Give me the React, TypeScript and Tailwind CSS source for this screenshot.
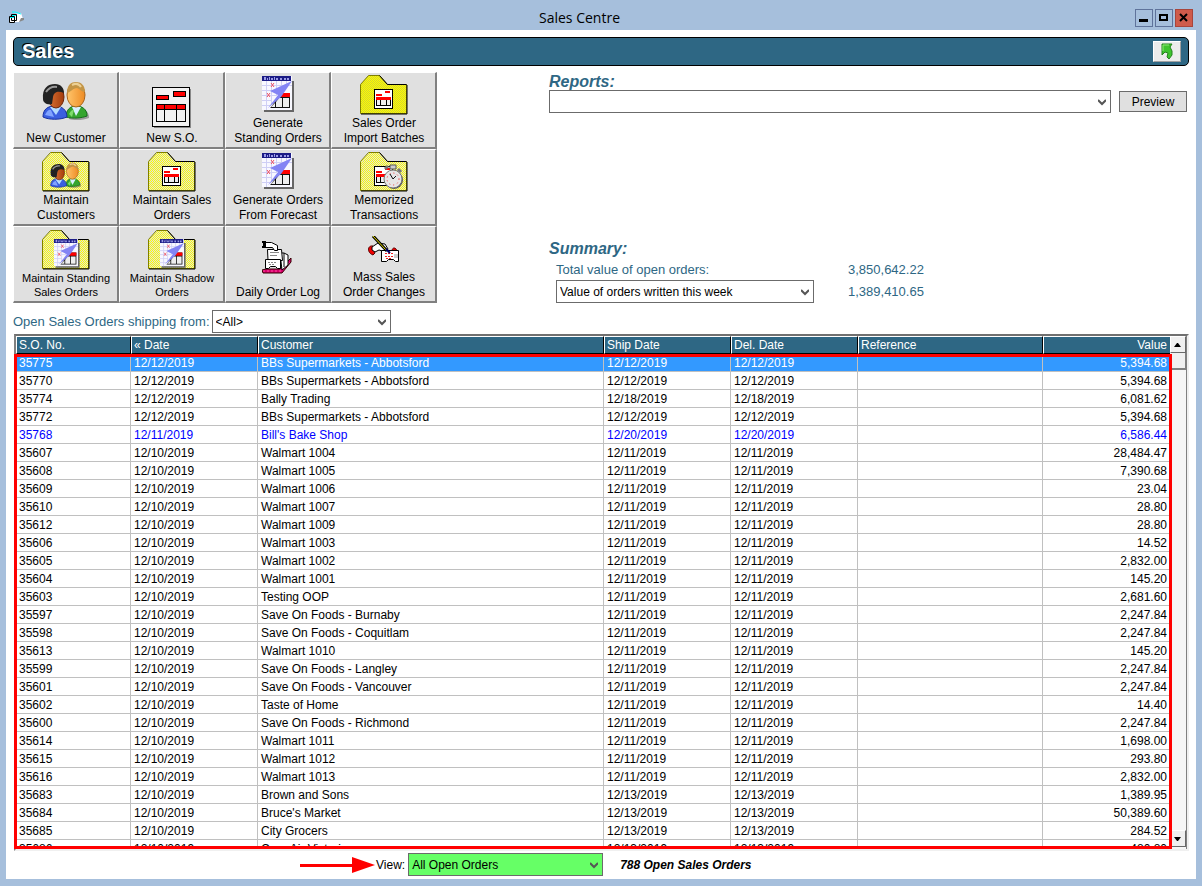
import type { ReactNode } from "react";

const orders = [
  ["35775", "12/12/2019", "BBs Supermarkets - Abbotsford", "12/12/2019", "5,394.68"],
  ["35770", "12/12/2019", "BBs Supermarkets - Abbotsford", "12/12/2019", "5,394.68"],
  ["35774", "12/12/2019", "Bally Trading", "12/18/2019", "6,081.62"],
  ["35772", "12/12/2019", "BBs Supermarkets - Abbotsford", "12/12/2019", "5,394.68"],
  ["35768", "12/11/2019", "Bill's Bake Shop", "12/20/2019", "6,586.44"],
  ["35607", "12/10/2019", "Walmart 1004", "12/11/2019", "28,484.47"],
  ["35608", "12/10/2019", "Walmart 1005", "12/11/2019", "7,390.68"],
  ["35609", "12/10/2019", "Walmart 1006", "12/11/2019", "23.04"],
  ["35610", "12/10/2019", "Walmart 1007", "12/11/2019", "28.80"],
  ["35612", "12/10/2019", "Walmart 1009", "12/11/2019", "28.80"],
  ["35606", "12/10/2019", "Walmart 1003", "12/11/2019", "14.52"],
  ["35605", "12/10/2019", "Walmart 1002", "12/11/2019", "2,832.00"],
  ["35604", "12/10/2019", "Walmart 1001", "12/11/2019", "145.20"],
  ["35603", "12/10/2019", "Testing OOP", "12/11/2019", "2,681.60"],
  ["35597", "12/10/2019", "Save On Foods - Burnaby", "12/11/2019", "2,247.84"],
  ["35598", "12/10/2019", "Save On Foods - Coquitlam", "12/11/2019", "2,247.84"],
  ["35613", "12/10/2019", "Walmart 1010", "12/11/2019", "145.20"],
  ["35599", "12/10/2019", "Save On Foods - Langley", "12/11/2019", "2,247.84"],
  ["35601", "12/10/2019", "Save On Foods - Vancouver", "12/11/2019", "2,247.84"],
  ["35602", "12/10/2019", "Taste of Home", "12/11/2019", "14.40"],
  ["35600", "12/10/2019", "Save On Foods - Richmond", "12/11/2019", "2,247.84"],
  ["35614", "12/10/2019", "Walmart 1011", "12/11/2019", "1,698.00"],
  ["35615", "12/10/2019", "Walmart 1012", "12/11/2019", "293.80"],
  ["35616", "12/10/2019", "Walmart 1013", "12/11/2019", "2,832.00"],
  ["35683", "12/10/2019", "Brown and Sons", "12/13/2019", "1,389.95"],
  ["35684", "12/10/2019", "Bruce's Market", "12/13/2019", "50,389.60"],
  ["35685", "12/10/2019", "City Grocers", "12/13/2019", "284.52"],
  ["35686", "12/10/2019", "Cara Air Victoria", "12/13/2019", "480.80"],
];

// checkerboard of single pixels that tints the folders
const ditherDots = Array.from({ length: 38 * 23 }, (_, i) => {
  const row = Math.floor(i / 23);
  return `M${(i % 23) * 2 + 1 + (row % 2)} ${row + 1}h1v1h-1z`;
}).join("");

function People() {
  return (
    <g>
      <path d="M26 37c-1-7 3-11 9-11s11 3 11 10c-5 2-14 3-20 1z" fill="#555" opacity=".5" transform="translate(1 1)" />
      <path d="M24 36c0-7 4-11 10-11s11 3 11 10c-5 2-14 3-21 1z" fill="#35a52f" stroke="#14701a" />
      <path d="M30 26l4 9 5-9z" fill="#d8f0ff" />
      <path d="M27 33q3-5 5-4l-2 7z" fill="#7fdc6c" />
      <ellipse cx="34" cy="14" rx="9" ry="12" fill="url(#blondFace)" stroke="#a9641c" />
      <path d="M25 12c0-8 4-11 9-11s9 3 9 10c-3 0-5-3-8-4-4 0-6 4-10 5z" fill="#c39546" />
      <path d="M30 4q6-3 9 2" fill="none" stroke="#ecd094" strokeWidth="2" />
      <path d="M1 36c0-8 5-11 12-11s12 4 12 11c-7 3-18 3-24 0z" fill="#3b5fe0" stroke="#172f9e" />
      <path d="M8 26l6 8 5-8z" fill="#b5dcff" />
      <path d="M3 34q3-6 6-5l3 7z" fill="#82a4ff" />
      <ellipse cx="14" cy="16" rx="8" ry="11" fill="url(#darkFace)" stroke="#6d2407" />
      <path d="M1 18C0 7 6 3 13 3c6 0 9 4 9 9-5-2-10-2-11 4l-1 7c-5 1-9-1-9-5z" fill="#222" />
      <path d="M4 11q4-6 11-5" fill="none" stroke="#999" strokeWidth="2" />
    </g>
  );
}

function Form() {
  return (
    <g shapeRendering="crispEdges">
      <path d="M2 2h37v39H2z" fill="#888" />
      <path d="M0 0h38v40H0z" fill="#000" />
      <path d="M1 1h36v38H1z" fill="#f2f2f2" />
      <path d="M4 8h13v5H4zM21 4h13v6H21zM4 17h30v18H4z" fill="#000" />
      <path d="M5 9h11v3H5zM22 5h11v4H22zM5 18h7v4H5zM13 18h11v4H13zM25 18h8v4h-8z" fill="#f00" />
      <path d="M5 23h7v11H5zM13 23h11v11H13zM25 23h8v11h-8z" fill="#f2f2f2" />
    </g>
  );
}

function SmallForm() {
  return (
    <g shapeRendering="crispEdges">
      <path d="M0 0h19v20H0z" fill="#000" />
      <path d="M1 1h17v18H1z" fill="#fff" />
      <path d="M2 5h6v2H2zM11 2h5v2h-5zM2 8h15v3H2z" fill="#f00" />
      <path d="M2 11h15v6H2z" fill="#000" />
      <path d="M3 11h3v5H3zM7 11h5v5H7zM13 11h3v5h-3z" fill="#eee" />
    </g>
  );
}

function Calendar() {
  return (
    <g>
      <path d="M2 5h30v31H2z" fill="#666" />
      <path d="M0 0h30v34H0z" fill="#f8f8ff" />
      <path d="M0 9.500h30M0 14.500h20M0 19.500h14M0 24.500h10M0 29.500h8M4.500 5v29M9.500 5v23M14.500 5v15M19.500 5v12M24.500 5v7" stroke="#cfcff5" fill="none" />
      <path d="M0 0h29v5H0z" fill="#1c1c86" />
      <path d="M2 1h2v3H2zM5 2h1v2H5zM7 1h1v3H7zM9 2h2v2H9zM12 1h1v3h-1zM14 2h2v2h-2zM18 2h2v2h-2zM22 2h2v2h-2zM25 2h2v2h-2z" fill="#9c9ce6" />
      <path d="M9 7l3 4M12 7l-3 4M5 17l3 4M8 17l-3 4" stroke="#f0505f" />
      <path d="M9 31l10-14h9v15H8z" fill="#111" />
      <path d="M20 17h8v4h-9z" fill="#f00" />
      <path d="M21 22h6v9h-6zM14 26l3-4h3v9h-6zM9 31l4-4v4z" fill="#eee" />
      <path d="M30 5L8 15l8 4L6 32 19 21z" fill="#8384f4" />
    </g>
  );
}

function Folder({ solid, children }: { solid?: boolean; children: ReactNode }) {
  return (
    <svg width="48" height="40" viewBox="0 0 48 40">
      <path d="M.5 38.500V9.500l8-9h11l8 9h19v29z" fill={solid ? "#d2d232" : "#dedede"} />
      <path d={ditherDots} clipPath="url(#folderShape)" fill="#ffff00" />
      <path d="M.5 38.500V9.500l8-9h11l8 9h19v29z" fill="none" stroke="#808000" />
      <path d="M19.500.5l8 9h19M47 10v29H1" fill="none" stroke="#000" />
      {children}
    </svg>
  );
}

function Stopwatch() {
  return (
    <g>
      <path d="M25 17l3-3M38 17l3 3" stroke="#777" strokeWidth="3" />
      <path d="M30 13h6v4h-6z" fill="#ccc" stroke="#555" />
      <circle cx="34" cy="28" r="9" fill="#555" />
      <circle cx="33" cy="27" r="9" fill="#e6e6e6" stroke="#777" />
      <circle cx="33" cy="27" r="6" fill="none" stroke="#e33" strokeDasharray="1 3" />
      <path d="M33 27l-3-5M33 27l3-3" stroke="#111" />
    </g>
  );
}

function DailyLog() {
  return (
    <svg width="32" height="34" viewBox="0 0 32 34">
      <path d="M0 29l4-1h14l11-11v4L20 32H1z" fill="#d8006c" stroke="#300" />
      <path d="M1 30h18l9-9" stroke="#ff4fa0" strokeDasharray="2 2" fill="none" />
      <path d="M18 12h4l4 2v10l-6 5z" fill="#fff" stroke="#000" />
      <path d="M22 12v14" stroke="#000" />
      <path d="M5.500 8.500h14l1 11H6z" fill="#fff" stroke="#000" />
      <path d="M8 11.500h9M8 14.500h7" stroke="#888" />
      <path d="M3.500 18.500h15v9h-3l-2-2h-5l-2 2h-3z" fill="#fff" stroke="#000" />
      <path d="M6 21.500h9M7 23.500h6" stroke="#888" strokeDasharray="2 1" />
      <path d="M3.500 1.500h6l6 3v5h-3l-2-3h-7z" fill="#fff" stroke="#000" />
      <path d="M0 1h4M0 6h4M2 0v7" stroke="#000" strokeWidth="2" />
    </svg>
  );
}

function MassChanges() {
  return (
    <svg width="32" height="28" viewBox="0 0 32 28">
      <path d="M5 10c-6-1-6 7 0 9l2-2-2-4z" fill="#e00" stroke="#500" />
      <path d="M4 11l6-4 7 1 3 5-2 3-7-2-4 2-3-2z" fill="#fff" stroke="#000" />
      <path d="M24 15c0-4 4-4 5 0z" fill="#e00" stroke="#500" />
      <path d="M13.500 14.500h17v11h-3l-2-2h-5l-2 2h-5z" fill="#fff" stroke="#000" />
      <path d="M17 17.500h8M17 20.500h8M18 22.500h6" stroke="#e22" strokeDasharray="2 1" />
      <path d="M26 18h4v4h-4z" fill="#ccc" />
      <path d="M5 0l14 15" stroke="#000" strokeWidth="3" />
      <path d="M5 0l13 14" stroke="#e8e000" strokeWidth="1" />
      <path d="M18 13l4 4" stroke="#00006a" strokeWidth="2" />
    </svg>
  );
}

const calendarIcon = (
  <svg width="32" height="39" viewBox="0 0 32 39">
    <Calendar />
  </svg>
);

const folderCalendar = (
  <Folder>
    <g transform="translate(12 9) scale(.8)">
      <Calendar />
    </g>
  </Folder>
);

const actions: { lines: string[]; icon: ReactNode; small?: boolean; gap?: string }[] = [
  {
    lines: ["New Customer"],
    gap: "pb-[10px]",
    icon: (
      <svg width="48" height="40" viewBox="0 0 48 40">
        <People />
      </svg>
    ),
  },
  {
    lines: ["New S.O."],
    icon: (
      <svg width="40" height="43" viewBox="0 0 40 43">
        <Form />
      </svg>
    ),
  },
  { lines: ["Generate", "Standing Orders"], icon: calendarIcon },
  {
    lines: ["Sales Order", "Import Batches"],
    icon: (
      <Folder solid>
        <g transform="translate(14 14)">
          <SmallForm />
        </g>
      </Folder>
    ),
  },
  {
    lines: ["Maintain", "Customers"],
    icon: (
      <Folder>
        <g transform="translate(8 10) scale(.66)">
          <People />
        </g>
      </Folder>
    ),
  },
  {
    lines: ["Maintain Sales", "Orders"],
    icon: (
      <Folder>
        <g transform="translate(14 14)">
          <SmallForm />
        </g>
      </Folder>
    ),
  },
  { lines: ["Generate Orders", "From Forecast"], icon: calendarIcon },
  {
    lines: ["Memorized", "Transactions"],
    icon: (
      <Folder>
        <g transform="translate(14 14)">
          <SmallForm />
        </g>
        <Stopwatch />
      </Folder>
    ),
  },
  { lines: ["Maintain Standing", "Sales Orders"], icon: folderCalendar, small: true },
  { lines: ["Maintain Shadow", "Orders"], icon: folderCalendar, small: true },
  { lines: ["Daily Order Log"], gap: "pb-[10px]", icon: <DailyLog /> },
  { lines: ["Mass Sales", "Order Changes"], gap: "pb-[6px]", icon: <MassChanges /> },
];

function Select({ id, label, options, className = "" }: { id: string; label?: string; options: string[]; className?: string }) {
  return (
    <div className={`relative h-[23px] border border-[#6b6b6b] ${className}`}>
      <select id={id} aria-label={label} className="block h-full w-full appearance-none bg-transparent pl-[3px] pr-5 text-[12px] text-black outline-none">
        {options.map((o) => (
          <option key={o}>{o}</option>
        ))}
      </select>
      <svg className="pointer-events-none absolute right-1 top-2" width="8" height="7" viewBox="0 0 8 7">
        <path d="M0 1l4 4 4-4" fill="none" stroke="#555" strokeWidth="2" />
      </svg>
    </div>
  );
}

function TitleBar() {
  return (
    <header className="flex h-[30px] shrink-0 items-center justify-between px-[9px] pt-[6px]">
      <svg width="15" height="14" viewBox="0 0 15 14">
        <path d="M5 3l7-1 2 6-4 3H5z" fill="#fff" />
        <path d="M3 1h3l6 2" stroke="#0ff" fill="none" />
        <path d="M12 7h3v2l-5 2z" fill="#888" />
        <path d="M2.500 3.500h5v6h-5zM.5 5.500h5v6h-5z" fill="#fff" stroke="#000" />
        <path d="M3 4.500h4M1 6.500h4" stroke="#0ff" />
      </svg>
      <h1 className="font-['Open_Sans','Noto_Sans',sans-serif] text-[14px] leading-5 text-black">Sales Centre</h1>
      <div className="flex gap-[2px]">
        <button aria-label="Minimize" className="grid size-[18px] place-items-center border border-[#5f739b]">
          <svg width="10" height="10" viewBox="0 0 10 10">
            <path d="M0 6h9v3H0z" />
          </svg>
        </button>
        <button aria-label="Maximize" className="grid size-[18px] place-items-center border border-[#5f739b]">
          <svg width="10" height="10" viewBox="0 0 10 10">
            <path d="M1 2h7v5H1z" fill="none" stroke="#000" strokeWidth="2" />
          </svg>
        </button>
        <button aria-label="Close" className="grid size-[18px] place-items-center border border-[#a8453c] bg-[#cf5b4b]">
          <svg width="10" height="10" viewBox="0 0 10 10">
            <path d="M1 1l7 7M8 1L1 8" stroke="#000" strokeWidth="2" />
          </svg>
        </button>
      </div>
    </header>
  );
}

function OrdersTable() {
  const th = "h-[18px] border-b border-r border-black border-l border-l-white border-t border-t-white px-[2px] text-left font-normal";
  const td = "h-[18px] overflow-hidden whitespace-nowrap border-b border-r border-[#c0c0c0] px-[3px] pt-px";
  return (
    <div className="ml-px mt-px flex min-h-0 flex-1 border-2 border-b-[#f0f0f0] border-l-[#808080] border-r-[#f0f0f0] border-t-[#707070]">
      <div className="relative min-w-0 flex-1">
        <div className="h-full overflow-hidden">
          <table className="w-full table-fixed border-separate border-spacing-0 text-[12px] leading-[16px]">
            <colgroup>
              <col className="w-[115px]" />
              <col className="w-[127px]" />
              <col />
              <col className="w-[127px]" />
              <col className="w-[127px]" />
              <col className="w-[185px]" />
              <col className="w-[127px]" />
            </colgroup>
            <thead className="bg-[#2e6784] text-white">
              <tr>
                <th className={th}>S.O. No.</th>
                <th className={th}>« Date</th>
                <th className={th}>Customer</th>
                <th className={th}>Ship Date</th>
                <th className={th}>Del. Date</th>
                <th className={th}>Reference</th>
                <th className="h-[18px] border-b border-l border-t border-b-black border-l-white border-t-white px-[3px] text-right font-normal">Value</th>
              </tr>
            </thead>
            <tbody>
              {orders.map(([no, date, customer, ship, value], i) => (
                <tr key={no} className={i === 0 ? "bg-[#3399ff] text-white" : no === "35768" ? "text-[#0000ff]" : "text-black"}>
                  <td className={td}>{no}</td>
                  <td className={td}>{date}</td>
                  <td className={td}>{customer}</td>
                  <td className={td}>{ship}</td>
                  <td className={td}>{ship}</td>
                  <td className={td} />
                  <td className="h-[18px] border-b border-[#c0c0c0] px-[3px] pt-px text-right">{value}</td>
                </tr>
              ))}
            </tbody>
          </table>
        </div>
        <div className="pointer-events-none absolute -left-[2px] -right-[2px] bottom-0 top-[18px] z-10 border-[3px] border-[#ff0000]" />
      </div>
      <div className="flex w-[17px] flex-col border-r border-[#808080] bg-[#f6f6f6] pb-[2px]">
        <button aria-label="Scroll up" className="grid h-[17px] place-items-center border border-b-[#696969] border-l-white border-r-[#696969] border-t-white bg-[#f0f0f0]">
          <svg width="8" height="4" viewBox="0 0 8 4">
            <path d="M0 4l3-4h1l3 4z" />
          </svg>
        </button>
        <div className="h-[17px] border-b-2 border-r border-[#808080] bg-[#f0f0f0]" />
        <div className="flex-1" />
        <button aria-label="Scroll down" className="grid h-[17px] place-items-center border border-b-[#696969] border-l-white border-r-[#696969] border-t-white bg-[#f0f0f0]">
          <svg width="8" height="4" viewBox="0 0 8 4">
            <path d="M0 0l3 4h1l3-4z" />
          </svg>
        </button>
      </div>
    </div>
  );
}

export default function App() {
  return (
    <div className="flex h-screen flex-col bg-[#a6bfdc] font-['Liberation_Sans',Arial,sans-serif]">
      <svg width="0" height="0" className="absolute">
        <defs>
          <clipPath id="folderShape">
            <path d="M1 38V10l8-9h10l8 9h19v28z" />
          </clipPath>
          <linearGradient id="blondFace">
            <stop offset="0" stopColor="#ffc56b" />
            <stop offset="1" stopColor="#ee8b24" />
          </linearGradient>
          <linearGradient id="darkFace">
            <stop offset="0" stopColor="#dd7434" />
            <stop offset="1" stopColor="#a33b0d" />
          </linearGradient>
        </defs>
      </svg>

      <TitleBar />

      <main className="mx-[6px] mb-[7px] flex min-h-0 flex-1 flex-col bg-white px-[7px] pb-[3px] pt-[7px]">
        <div className="flex h-[29px] shrink-0 items-center justify-between rounded-[5px] border border-black bg-[#2e6784] pl-2 pr-[7px]">
          <h2 className="pb-[2px] text-[20px] font-bold leading-6 text-white [text-shadow:-1px_-1px_0_#000]">Sales</h2>
          <button aria-label="Back" className="grid h-[21px] w-[28px] place-items-center border border-b-[#a0a0a0] border-l-white border-r-[#a0a0a0] border-t-white bg-[#ececec]">
            <svg width="12" height="17" viewBox="0 0 12 17">
              <path d="M1 1h10L9 4l2 4v4l-3 4-2-2 1-4-3-1-3 3z" fill="#3fc42f" stroke="#23821c" />
              <path d="M2 8V2h6" fill="none" stroke="#8de878" />
            </svg>
          </button>
        </div>

        <div className="mt-[6px] flex shrink-0">
          <div className="grid w-[424px] shrink-0 auto-rows-[77px] grid-cols-4">
            {actions.map(({ lines, icon, small, gap = "pb-px" }) => (
              <button
                key={lines.join(" ")}
                className="flex flex-col items-center justify-end border-b-2 border-l border-r-2 border-t border-b-[#808080] border-l-white border-r-[#808080] border-t-white bg-[#e0e0e0] pb-px pl-px text-black"
              >
                <span className={gap}>{icon}</span>
                <span className={small ? "pb-px text-[11px] leading-[14px]" : "text-[12px] leading-[15px]"}>
                  {lines.map((line) => (
                    <span key={line} className="block whitespace-nowrap">
                      {line}
                    </span>
                  ))}
                </span>
              </button>
            ))}
          </div>

          <div className="ml-[112px] mr-[2px] flex flex-1 flex-col justify-between text-[#2e6784]">
            <section>
              <label htmlFor="reports" className="block pt-[2px] text-[16px] font-bold italic leading-[16px]">
                Reports:
              </label>
              <div className="flex items-center gap-2">
                <Select id="reports" options={[""]} className="flex-1" />
                <button className="h-[21px] w-[68px] border border-[#6b6b6b] bg-[#e0e0e0] text-[12px] text-black">Preview</button>
              </div>
            </section>
            <section>
              <h3 className="pt-[2px] text-[16px] font-bold italic leading-[16px]">Summary:</h3>
              <div className="ml-[7px] grid grid-cols-[258px_1fr] items-center gap-x-[34px] text-[13px]">
                <span className="pt-[2px] leading-[21px]">Total value of open orders:</span>
                <span className="pt-[2px] leading-[21px]">3,850,642.22</span>
                <Select id="summary" label="Summary value" options={["Value of orders written this week"]} />
                <span>1,389,410.65</span>
              </div>
            </section>
          </div>
        </div>

        <div className="mt-[7px] flex shrink-0 items-center gap-[2px] text-[#2e6784]">
          <label htmlFor="ship-from" className="text-[13px]">
            Open Sales Orders shipping from:
          </label>
          <Select id="ship-from" options={["<All>"]} className="w-[179px]" />
        </div>

        <OrdersTable />

        <footer className="mt-[2px] flex shrink-0 items-center pl-[287px] text-[12px] text-black">
          <svg width="75" height="16" viewBox="0 0 75 16">
            <path d="M0 7h52V0l23 8-23 8V10H0z" fill="#f00" />
          </svg>
          <label htmlFor="view" className="pl-px pr-[3px]">
            View:
          </label>
          <Select id="view" options={["All Open Orders"]} className="w-[195px] bg-[#66ff66]" />
          <strong className="ml-[17px] italic">788 Open Sales Orders</strong>
        </footer>
      </main>
    </div>
  );
}
